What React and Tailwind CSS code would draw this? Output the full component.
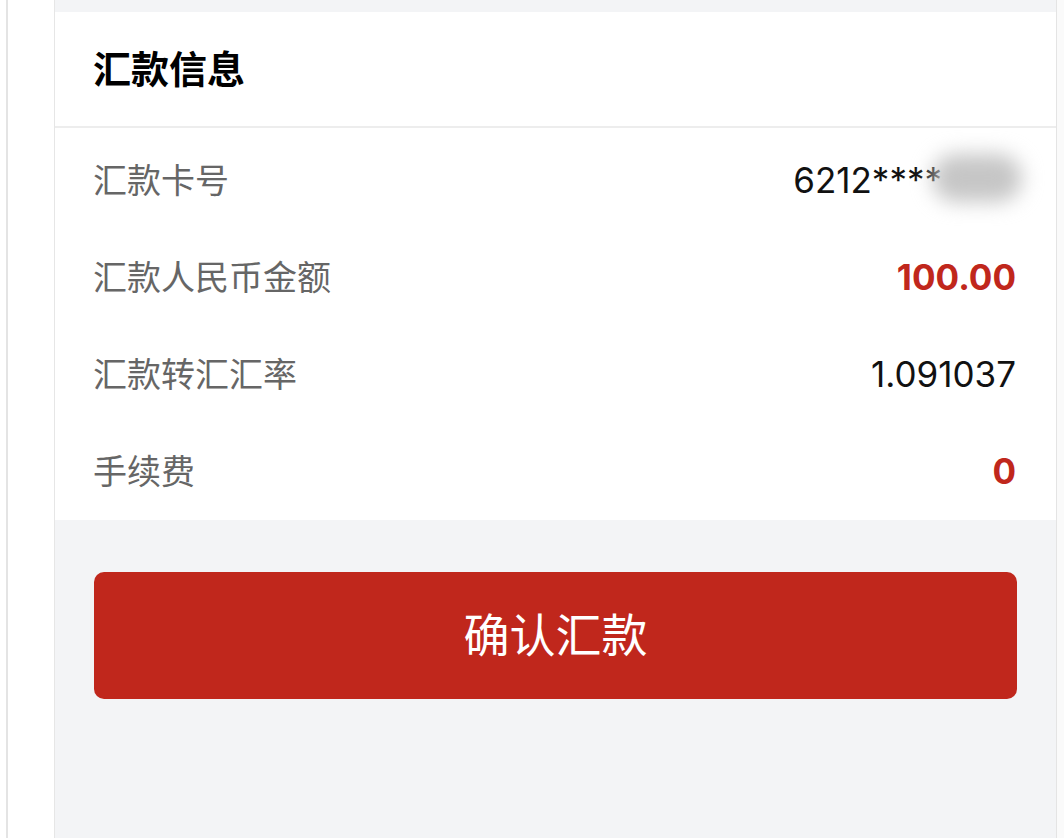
export default function App() {
  const rows = [
    { label: "汇款卡号", value: "6212****", masked: true },
    { label: "汇款人民币金额", value: "100.00", red: true },
    { label: "汇款转汇汇率", value: "1.091037" },
    { label: "手续费", value: "0", red: true },
  ];

  return (
    <div
      className="flex h-[838px] w-[1064px] overflow-hidden bg-white"
      style={{ fontFamily: 'Inter, "Noto Sans CJK SC", sans-serif' }}
    >
      {/* left edge strip */}
      <div className="w-[6px] bg-white" />
      <div className="w-[2px] bg-[#e4e4e4]" />
      <div className="w-[46px] bg-white" />
      <div className="w-[1px] bg-[#e6e6e6]" />

      {/* main */}
      <div className="flex w-[1001px] flex-col bg-[#f3f4f6]">
        <div className="h-[12px]" />
        <div className="bg-white">
          <div className="flex h-[116px] items-center border-b-2 border-[#ededed] pl-[38px] pr-[40px]">
            <h2 className="text-[38px] font-bold text-black">汇款信息</h2>
          </div>
          <div className="pt-[4px]">
            {rows.map((r) => (
              <div
                key={r.label}
                className="flex h-[97px] items-center justify-between pl-[38px] pr-[40px]"
              >
                <span className="text-[34px] text-[#666666]">{r.label}</span>
                {r.masked ? (
                  <span className="-mr-[6px] flex items-center text-[35px] text-[#111]">
                    {r.value}
                    <span className="-ml-[10px] -mt-[6px] inline-block h-[48px] w-[90px] rounded-full bg-[#c6c6c6] blur-[10px]" />
                  </span>
                ) : (
                  <span
                    className={
                      r.red
                        ? "text-[35px] font-bold text-[#c0271c]"
                        : "text-[35px] text-[#111]"
                    }
                  >
                    {r.value}
                  </span>
                )}
              </div>
            ))}
          </div>
        </div>
        <div className="px-[39px] pt-[52px]">
          <button className="flex h-[127px] w-full items-center justify-center rounded-[10px] bg-[#c0271c] text-[46px] text-white">
            确认汇款
          </button>
        </div>
      </div>

      {/* right edge */}
      <div className="w-[1px] bg-[#e4e4e4]" />
      <div className="flex-1 bg-[#fafafa]" />
    </div>
  );
}
